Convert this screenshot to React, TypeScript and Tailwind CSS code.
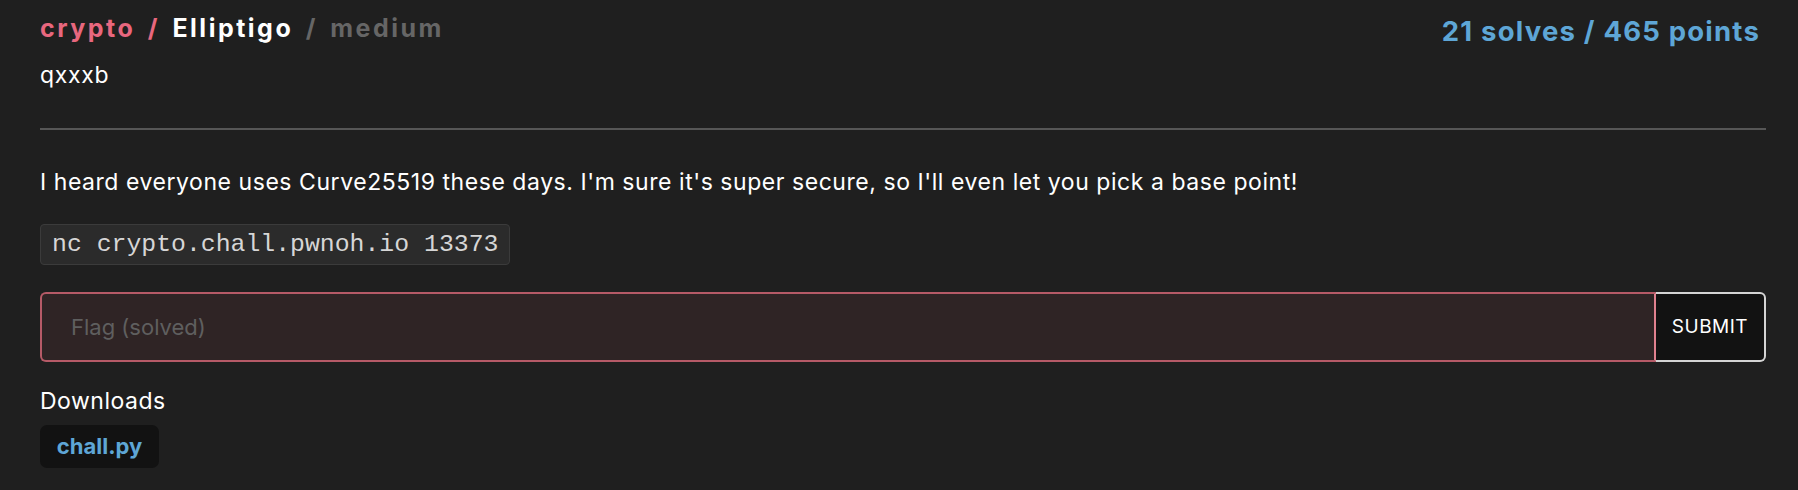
export default function App() {
  return (
    <div
      className="min-h-[490px] w-full bg-[#1f1f1f] pl-[40px] pr-[32px] pt-[13px] text-white"
      style={{ fontFamily: "Inter, 'Noto Sans', sans-serif" }}
    >
      {/* Header */}
      <div className="flex items-start justify-between">
        <h1 className="text-[25px] font-bold leading-[30px] tracking-[2.5px]">
          <span className="text-[#e8677e]">crypto</span>{" "}
          <span className="mx-[4px] text-[#e8677e]">/</span>{" "}
          <span className="text-white">Elliptigo</span>{" "}
          <span className="mx-[4px] text-[#666666]">/</span>{" "}
          <span className="text-[#666666]">medium</span>
        </h1>
        <div className="mt-[2px] pr-[6px] text-[27.5px] font-bold leading-[33px] tracking-[1.2px] text-[#5ea6d6]">
          21 solves / 465 points
        </div>
      </div>
      <div className="mt-[10px] text-[23px] leading-[34px] tracking-[0.7px] text-white">qxxxb</div>

      <div className="mt-[36px] h-[2px] w-full bg-[#565656]" />

      {/* Description */}
      <p className="mt-[35px] text-[23px] leading-[34px] tracking-[0.55px] text-white">
        I heard everyone uses Curve25519 these days. I'm sure it's super secure, so I'll even let you pick a base point!
      </p>

      <div className="mt-[25px] inline-block h-[41px] rounded-[4px] border border-[#3b3b3b] bg-[#2b2b2b] px-[11px]">
        <code
          className="block text-[24.8px] leading-[39px] text-[#d6d6d6]"
          style={{ fontFamily: "'Liberation Mono', 'Courier New', monospace" }}
        >
          nc crypto.chall.pwnoh.io 13373
        </code>
      </div>

      {/* Flag form */}
      <div className="mt-[27px] flex h-[70px]">
        <input
          disabled
          placeholder="Flag (solved)"
          className="h-full flex-1 rounded-l-[6px] border-2 border-[#b65a67] border-r-[#e0808e] bg-[#2f2425] pl-[29px] text-[22px] text-white outline-none placeholder:text-[#5f5f5f]"
        />
        <button className="h-full w-[110px] rounded-r-[6px] border-2 border-l-0 border-[#d4d4d4] bg-[#121212] text-[19px] tracking-[0.5px] text-white">
          SUBMIT
        </button>
      </div>

      {/* Downloads */}
      <div className="mt-[22px] text-[23px] leading-[34px] tracking-[0.5px] text-white">Downloads</div>
      <div className="mt-[7px] inline-flex h-[43px] w-[119px] items-center justify-center rounded-[7px] bg-[#121212]">
        <span className="text-[22px] font-bold text-[#5ea6d6]">chall.py</span>
      </div>
    </div>
  );
}
